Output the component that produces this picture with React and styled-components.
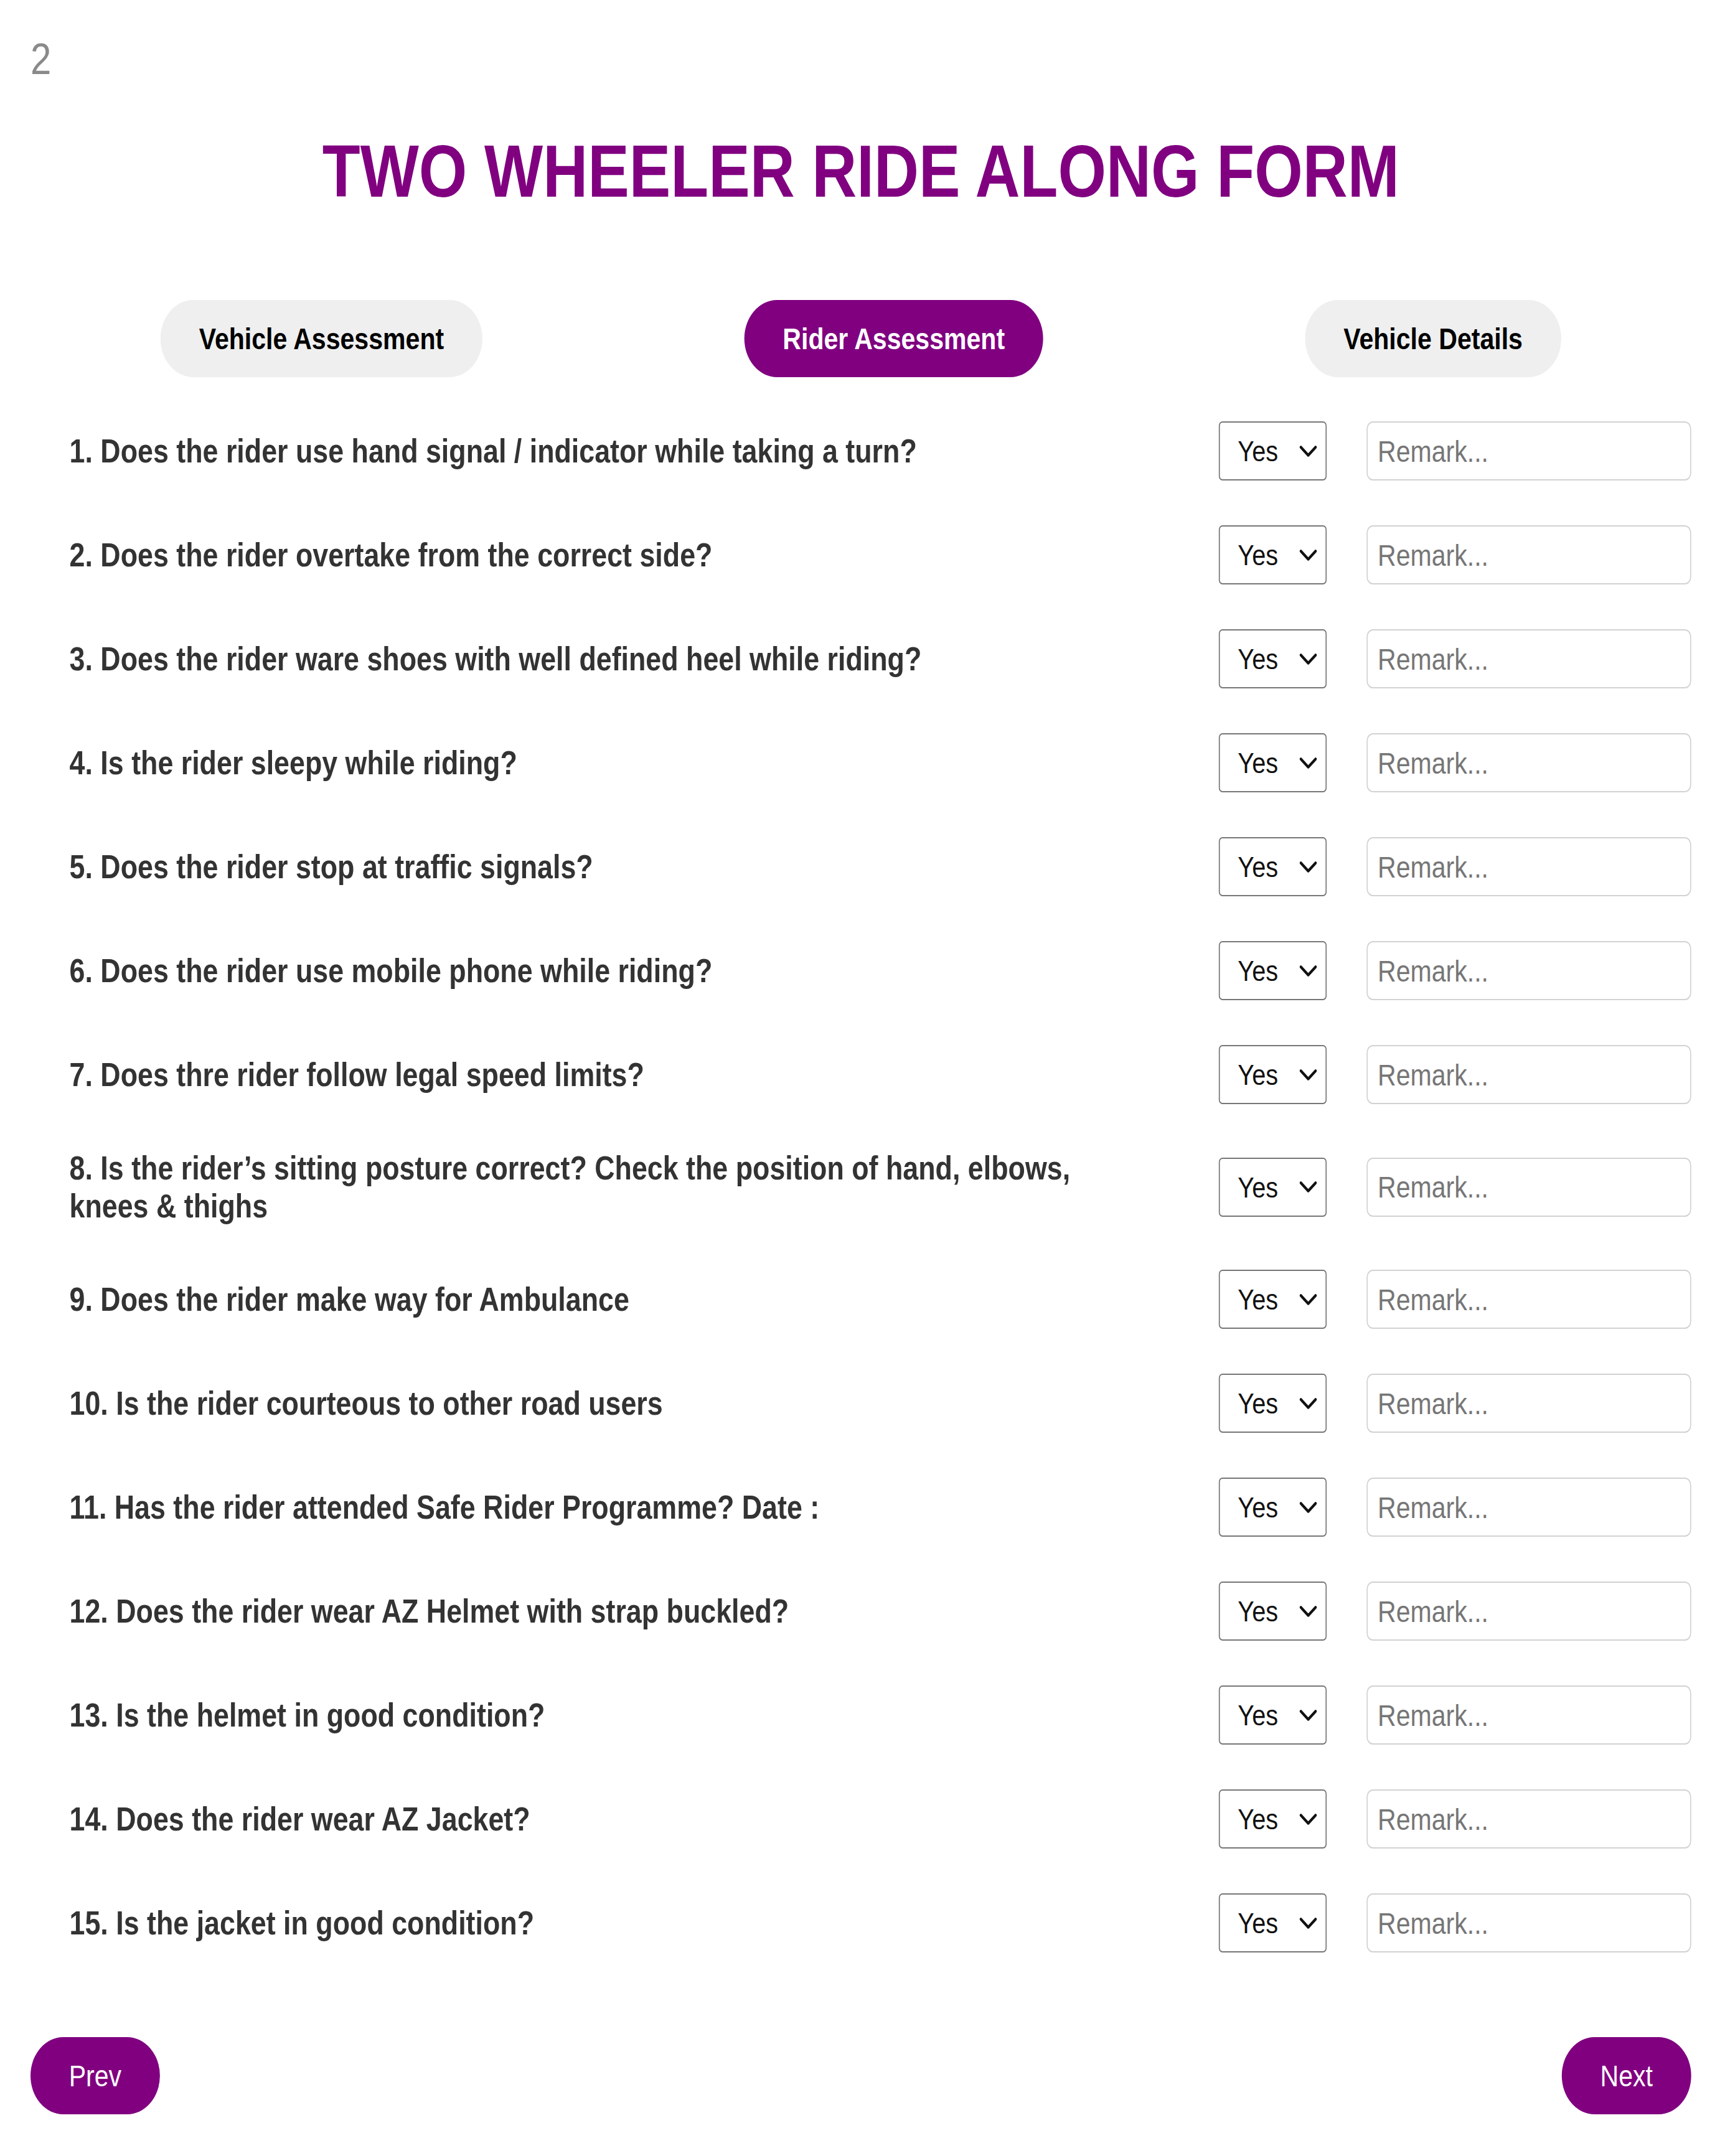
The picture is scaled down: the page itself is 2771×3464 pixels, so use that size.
import React from "react";
import styled, { createGlobalStyle } from "styled-components";

const GlobalStyle = createGlobalStyle`
  html, body {
    margin: 0;
    padding: 0;
    background: #ffffff;
    overflow: hidden;
  }
  body {
    font-family: "Liberation Sans", Arial, Helvetica, sans-serif;
  }
  * { box-sizing: border-box; }
`;

const PURPLE = "#800080";

/* The reference is a horizontally condensed capture; the whole sheet is
   laid out at its natural width and condensed once on the x axis. */
const Stage = styled.div`
  width: 3279px;
  transform: scaleX(0.845);
  transform-origin: 0 0;
`;

const Page = styled.main`
  display: flex;
  flex-direction: column;
  padding: 54px 64px 67px 58px;
  font-family: "Liberation Sans", Arial, Helvetica, sans-serif;
`;

const PageNumber = styled.div`
  font-size: 71px;
  line-height: 82px;
  color: #8a8a8a;
`;

const Title = styled.h1`
  margin: 72px 0 0;
  font-size: 118px;
  line-height: 134px;
  font-weight: 700;
  color: ${PURPLE};
  text-align: center;
`;

const Tabs = styled.nav`
  margin-top: 140px;
  display: flex;
  justify-content: center;
  gap: 498px;
`;

const Tab = styled.button`
  border: none;
  border-radius: 999px;
  padding: 34px 73px;
  font-family: inherit;
  font-size: 48.6px;
  line-height: 56px;
  font-weight: 700;
  white-space: nowrap;
  background: ${(p) => (p.$active ? PURPLE : "#efefef")};
  color: ${(p) => (p.$active ? "#ffffff" : "#000000")};
`;

const Questions = styled.section`
  margin-top: 71px;
  display: flex;
  flex-direction: column;
  gap: 72px;
  padding-left: 74px;
`;

const Row = styled.div`
  display: grid;
  grid-template-columns: 1fr 205px 617px;
  column-gap: 76px;
  align-items: center;
`;

const Question = styled.label`
  max-width: 1990px;
  font-size: 53px;
  line-height: 61px;
  font-weight: 700;
  color: #333333;
`;

const SelectWrap = styled.div`
  position: relative;
  height: 95px;
`;

const Select = styled.select`
  appearance: none;
  -webkit-appearance: none;
  width: 100%;
  height: 100%;
  padding: 0 0 0 34px;
  border: 2px solid #767676;
  border-radius: 7px;
  background: #ffffff;
  font-family: inherit;
  font-size: 47px;
  color: #111111;
  outline: none;
`;

const Chevron = styled.svg`
  position: absolute;
  right: 18px;
  top: 50%;
  width: 34px;
  height: 19px;
  transform: translateY(-50%);
  pointer-events: none;
`;

const Remark = styled.input`
  width: 100%;
  height: 95px;
  padding: 0 19px;
  border: 2px solid #d2d2d2;
  border-radius: 12px;
  background: #ffffff;
  font-family: inherit;
  font-size: 48.6px;
  color: #222222;
  outline: none;
  &::placeholder {
    color: #767676;
  }
`;

const Footer = styled.footer`
  margin-top: 136px;
  display: flex;
  justify-content: space-between;
`;

const NavButton = styled.button`
  border: none;
  border-radius: 999px;
  padding: 34px 73px;
  background: ${PURPLE};
  color: #ffffff;
  font-family: inherit;
  font-size: 48.6px;
  line-height: 56px;
  font-weight: 400;
`;

const QUESTIONS = [
  "1. Does the rider use hand signal / indicator while taking a turn?",
  "2. Does the rider overtake from the correct side?",
  "3. Does the rider ware shoes with well defined heel while riding?",
  "4. Is the rider sleepy while riding?",
  "5. Does the rider stop at traffic signals?",
  "6. Does the rider use mobile phone while riding?",
  "7. Does thre rider follow legal speed limits?",
  "8. Is the rider\u2019s sitting posture correct? Check the position of hand, elbows, knees & thighs",
  "9. Does the rider make way for Ambulance",
  "10. Is the rider courteous to other road users",
  "11. Has the rider attended Safe Rider Programme? Date :",
  "12. Does the rider wear AZ Helmet with strap buckled?",
  "13. Is the helmet in good condition?",
  "14. Does the rider wear AZ Jacket?",
  "15. Is the jacket in good condition?",
];

const TABS = ["Vehicle Assessment", "Rider Assessment", "Vehicle Details"];

function YesNo() {
  return (
    <SelectWrap>
      <Select defaultValue="Yes">
        <option>Yes</option>
        <option>No</option>
      </Select>
      <Chevron viewBox="0 0 34 19" aria-hidden="true">
        <polyline
          points="3,3 17,16 31,3"
          fill="none"
          stroke="#111"
          strokeWidth="4.5"
          strokeLinecap="round"
          strokeLinejoin="round"
        />
      </Chevron>
    </SelectWrap>
  );
}

export default function App() {
  return (
    <>
      <GlobalStyle />
      <Stage>
        <Page>
          <PageNumber>2</PageNumber>
          <Title>TWO WHEELER RIDE ALONG FORM</Title>
          <Tabs>
            {TABS.map((t) => (
              <Tab key={t} $active={t === "Rider Assessment"}>
                {t}
              </Tab>
            ))}
          </Tabs>
          <Questions>
            {QUESTIONS.map((q) => (
              <Row key={q}>
                <Question>{q}</Question>
                <YesNo />
                <Remark placeholder="Remark..." />
              </Row>
            ))}
          </Questions>
          <Footer>
            <NavButton>Prev</NavButton>
            <NavButton>Next</NavButton>
          </Footer>
        </Page>
      </Stage>
    </>
  );
}
